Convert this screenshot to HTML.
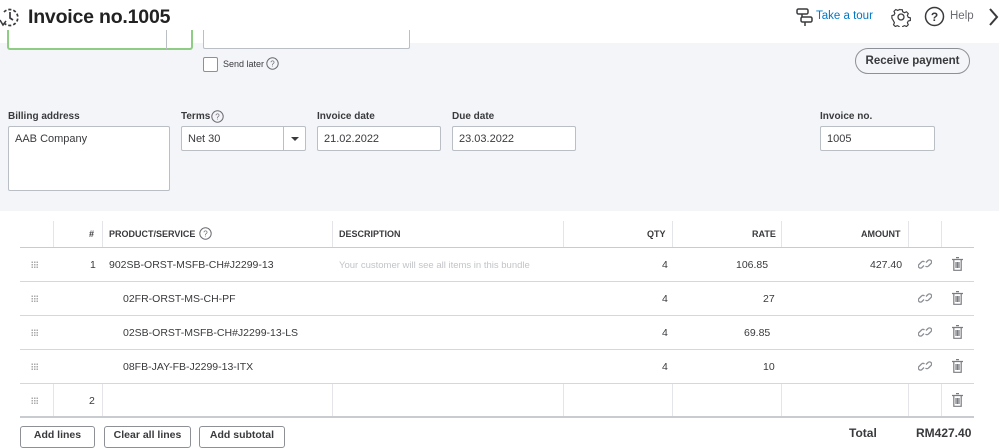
<!DOCTYPE html>
<html><head><meta charset="utf-8"><style>
*{box-sizing:border-box;margin:0;padding:0}
body{width:999px;height:443px;overflow:hidden;background:#fff;font-family:"Liberation Sans",Arial,sans-serif;color:#393a3d;position:relative}
.a{position:absolute}
.gray{left:0;top:43px;width:999px;height:168px;background:#f4f5f8}
.inp{background:#fff;border:1px solid #babec5;border-radius:2px;font-size:11px;color:#393a3d;padding:0 6px;line-height:24px}
.lbl{font-size:10px;font-weight:bold;color:#393a3d}
.hl{height:1px;background:#d4d7dc}
.vl{width:1px;background:#e3e5e8}
.th{font-size:9px;font-weight:bold;color:#393a3d;top:229px}
.td{font-size:10.5px;color:#393a3d}
.btn{top:426px;height:22px;border:1px solid #8d9096;border-radius:3px;font-size:10.5px;font-weight:bold;text-align:center;line-height:17px;color:#393a3d;background:#fff}
.grip{width:7px;height:7px;background-image:radial-gradient(circle,#aaa 0.7px,transparent 0.9px);background-size:2.5px 2.5px}
</style></head><body>
<svg class="a" style="left:0;top:6px" width="20" height="22" viewBox="0 0 20 22"><path d="M4 6 A8 8 0 1 1 4 17" fill="none" stroke="#393a3d" stroke-width="1.7" stroke-dasharray="3 2"/><path d="M10 6v6l3 2" fill="none" stroke="#393a3d" stroke-width="1.7"/><path d="M0 14l3 5 3-4" fill="none" stroke="#393a3d" stroke-width="1.5"/></svg>
<div class="a" style="left:28px;top:6px;font-size:19.5px;font-weight:bold;color:#222;letter-spacing:-0.2px">Invoice no.1005</div>
<svg class="a" style="left:796px;top:8px" width="18" height="18" viewBox="0 0 18 18" fill="none" stroke="#393a3d" stroke-width="1.5"><rect x="1" y="1" width="11" height="5" rx="1.5"/><rect x="5" y="9" width="11" height="5" rx="1.5"/><path d="M6 6v3M9 14v4"/></svg>
<div class="a" style="left:816px;top:10px;font-size:11.5px;color:#0077c5">Take a tour</div>
<svg class="a" style="left:891px;top:7px" width="20" height="20" viewBox="0 0 20 20" fill="none" stroke="#393a3d" stroke-width="1.3"><circle cx="10" cy="10" r="3"/><path d="M8.5 2h3l.5 2.3 2 1 2.2-1 2 2-1 2.2 1 2 2.3.5v3l-2.3.5-1 2 1 2.2-2 2-2.2-1-2 1-.5 2.3h-3l-.5-2.3-2-1-2.2 1-2-2 1-2.2-1-2L0 11.5v-3l2.3-.5 1-2-1-2.2 2-2 2.2 1 2-1z" transform="scale(.9) translate(1 1)"/></svg>
<svg class="a" style="left:924px;top:6px" width="21" height="21" viewBox="0 0 21 21"><circle cx="10.5" cy="10.5" r="9" fill="none" stroke="#393a3d" stroke-width="1.5"/><text x="10.5" y="15" text-anchor="middle" font-size="12" font-weight="bold" fill="#393a3d" font-family="Liberation Sans">?</text></svg>
<div class="a" style="left:950px;top:10px;font-size:11.5px;color:#6b6c72">Help</div>
<svg class="a" style="left:988px;top:7px" width="11" height="20" viewBox="0 0 11 20"><path d="M2 2l7 8-7 8" fill="none" stroke="#393a3d" stroke-width="2"/></svg>

<div class="a gray"></div>
<div class="a" style="left:7px;top:30px;width:186px;height:20px;background:#fff;border:2px solid #8fcd84;border-top:none;border-radius:0 0 3px 3px"></div>
<div class="a" style="left:166px;top:30px;width:1px;height:19px;background:#babec5"></div>
<div class="a" style="left:203px;top:30px;width:207px;height:19px;background:#fff;border:1px solid #babec5;border-top:none;border-radius:0 0 2px 2px"></div>
<div class="a" style="left:203px;top:57px;width:15px;height:15px;border:1px solid #8d9096;border-radius:2px;background:#fff"></div>
<div class="a" style="left:223px;top:59px;font-size:9px;color:#393a3d">Send later</div>
<svg class="a" style="left:266px;top:57px" width="13" height="13" viewBox="0 0 13 13"><circle cx="6.5" cy="6.5" r="5.7" fill="none" stroke="#6b6c72"/><text x="6.5" y="9.5" text-anchor="middle" font-size="8" fill="#6b6c72" font-family="Liberation Sans">?</text></svg>
<div class="a" style="left:855px;top:48px;width:115px;height:26px;border:1.5px solid #8d9096;border-radius:13px;font-size:11.5px;font-weight:bold;display:flex;align-items:center;justify-content:center;color:#393a3d">Receive payment</div>

<div class="a lbl" style="left:8px;top:111px">Billing address</div>
<div class="a inp" style="left:8px;top:126px;width:162px;height:65px;line-height:24px">AAB Company</div>
<div class="a lbl" style="left:181px;top:111px">Terms</div>
<svg class="a" style="left:211px;top:110px" width="13" height="13" viewBox="0 0 13 13"><circle cx="6.5" cy="6.5" r="5.7" fill="none" stroke="#6b6c72"/><text x="6.5" y="9.5" text-anchor="middle" font-size="8" fill="#6b6c72" font-family="Liberation Sans">?</text></svg>
<div class="a inp" style="left:181px;top:126px;width:125px;height:25px">Net 30</div>
<div class="a" style="left:283px;top:126px;width:1px;height:25px;background:#babec5"></div>
<div class="a" style="left:291px;top:137px;width:0;height:0;border-left:4px solid transparent;border-right:4px solid transparent;border-top:4px solid #393a3d"></div>
<div class="a lbl" style="left:317px;top:111px">Invoice date</div>
<div class="a inp" style="left:317px;top:126px;width:124px;height:25px">21.02.2022</div>
<div class="a lbl" style="left:452px;top:111px">Due date</div>
<div class="a inp" style="left:452px;top:126px;width:124px;height:25px">23.03.2022</div>
<div class="a lbl" style="left:820px;top:111px">Invoice no.</div>
<div class="a inp" style="left:820px;top:126px;width:115px;height:25px">1005</div>

<div class="a vl" style="left:53px;top:221px;height:26px"></div>
<div class="a vl" style="left:102px;top:221px;height:26px"></div>
<div class="a vl" style="left:332px;top:221px;height:26px"></div>
<div class="a vl" style="left:563px;top:221px;height:26px"></div>
<div class="a vl" style="left:672px;top:221px;height:26px"></div>
<div class="a vl" style="left:781px;top:221px;height:26px"></div>
<div class="a vl" style="left:908px;top:221px;height:26px"></div>
<div class="a vl" style="left:941px;top:221px;height:26px"></div>
<div class="a vl" style="left:53px;top:383px;height:34px"></div>
<div class="a vl" style="left:102px;top:383px;height:34px"></div>
<div class="a vl" style="left:332px;top:383px;height:34px"></div>
<div class="a vl" style="left:563px;top:383px;height:34px"></div>
<div class="a vl" style="left:672px;top:383px;height:34px"></div>
<div class="a vl" style="left:781px;top:383px;height:34px"></div>
<div class="a vl" style="left:908px;top:383px;height:34px"></div>
<div class="a vl" style="left:941px;top:383px;height:34px"></div>

<div class="a th" style="left:89px">#</div>
<div class="a th" style="left:109px">PRODUCT/SERVICE</div>
<svg class="a" style="left:199px;top:227px" width="13" height="13" viewBox="0 0 13 13"><circle cx="6.5" cy="6.5" r="5.7" fill="none" stroke="#6b6c72"/><text x="6.5" y="9.5" text-anchor="middle" font-size="8" fill="#6b6c72" font-family="Liberation Sans">?</text></svg>
<div class="a th" style="left:339px">DESCRIPTION</div>
<div class="a th" style="left:647px">QTY</div>
<div class="a th" style="left:752px">RATE</div>
<div class="a th" style="left:861px">AMOUNT</div>

<div class="a hl" style="left:20px;top:247px;width:954px;background:#c8cbd0"></div>
<div class="a hl" style="left:20px;top:281px;width:954px"></div>
<div class="a hl" style="left:20px;top:315px;width:954px"></div>
<div class="a hl" style="left:20px;top:349px;width:954px"></div>
<div class="a hl" style="left:20px;top:383px;width:954px"></div>
<div class="a" style="left:20px;top:416px;width:954px;height:2px;background:#c8cbd0"></div>

<div class="a grip" style="left:31px;top:261px"></div>
<div class="a grip" style="left:31px;top:295px"></div>
<div class="a grip" style="left:31px;top:329px"></div>
<div class="a grip" style="left:31px;top:363px"></div>
<div class="a grip" style="left:31px;top:397px"></div>

<div class="a td" style="left:90px;top:259px">1</div>
<div class="a td" style="left:109px;top:259px">902SB-ORST-MSFB-CH#J2299-13</div>
<div class="a td" style="left:339px;top:260px;font-size:9.5px;color:#c2c4c8">Your customer will see all items in this bundle</div>
<div class="a td" style="left:662px;top:259px">4</div>
<div class="a td" style="left:736px;top:259px">106.85</div>
<div class="a td" style="left:870px;top:259px">427.40</div>

<div class="a td" style="left:123px;top:293px">02FR-ORST-MS-CH-PF</div>
<div class="a td" style="left:662px;top:293px">4</div>
<div class="a td" style="left:763px;top:293px">27</div>
<div class="a td" style="left:123px;top:327px">02SB-ORST-MSFB-CH#J2299-13-LS</div>
<div class="a td" style="left:662px;top:327px">4</div>
<div class="a td" style="left:744px;top:327px">69.85</div>
<div class="a td" style="left:123px;top:361px">08FB-JAY-FB-J2299-13-ITX</div>
<div class="a td" style="left:662px;top:361px">4</div>
<div class="a td" style="left:763px;top:361px">10</div>
<div class="a td" style="left:89px;top:395px">2</div>

<svg class="a" style="left:918px;top:257px" width="14" height="14" viewBox="0 0 14 14" fill="none" stroke="#8d9096" stroke-width="1.3"><path d="M6 8.5l-2 2a2 2 0 0 1-3-3l2.5-2.5a2 2 0 0 1 3 0M8 5.5l2-2a2 2 0 0 1 3 3l-2.5 2.5a2 2 0 0 1-3 0"/></svg>
<svg class="a" style="left:918px;top:291px" width="14" height="14" viewBox="0 0 14 14" fill="none" stroke="#8d9096" stroke-width="1.3"><path d="M6 8.5l-2 2a2 2 0 0 1-3-3l2.5-2.5a2 2 0 0 1 3 0M8 5.5l2-2a2 2 0 0 1 3 3l-2.5 2.5a2 2 0 0 1-3 0"/></svg>
<svg class="a" style="left:918px;top:325px" width="14" height="14" viewBox="0 0 14 14" fill="none" stroke="#8d9096" stroke-width="1.3"><path d="M6 8.5l-2 2a2 2 0 0 1-3-3l2.5-2.5a2 2 0 0 1 3 0M8 5.5l2-2a2 2 0 0 1 3 3l-2.5 2.5a2 2 0 0 1-3 0"/></svg>
<svg class="a" style="left:918px;top:359px" width="14" height="14" viewBox="0 0 14 14" fill="none" stroke="#8d9096" stroke-width="1.3"><path d="M6 8.5l-2 2a2 2 0 0 1-3-3l2.5-2.5a2 2 0 0 1 3 0M8 5.5l2-2a2 2 0 0 1 3 3l-2.5 2.5a2 2 0 0 1-3 0"/></svg>

<svg class="a" style="left:952px;top:257px" width="11" height="14" viewBox="0 0 11 14" fill="none" stroke="#7a7c82" stroke-width="1.2"><path d="M0 2.5h11M4 .6h3M1.8 2.5v10.8h7.4V2.5M4 5v6M5.5 5v6M7 5v6"/></svg>
<svg class="a" style="left:952px;top:291px" width="11" height="14" viewBox="0 0 11 14" fill="none" stroke="#7a7c82" stroke-width="1.2"><path d="M0 2.5h11M4 .6h3M1.8 2.5v10.8h7.4V2.5M4 5v6M5.5 5v6M7 5v6"/></svg>
<svg class="a" style="left:952px;top:325px" width="11" height="14" viewBox="0 0 11 14" fill="none" stroke="#7a7c82" stroke-width="1.2"><path d="M0 2.5h11M4 .6h3M1.8 2.5v10.8h7.4V2.5M4 5v6M5.5 5v6M7 5v6"/></svg>
<svg class="a" style="left:952px;top:359px" width="11" height="14" viewBox="0 0 11 14" fill="none" stroke="#7a7c82" stroke-width="1.2"><path d="M0 2.5h11M4 .6h3M1.8 2.5v10.8h7.4V2.5M4 5v6M5.5 5v6M7 5v6"/></svg>
<svg class="a" style="left:952px;top:393px" width="11" height="14" viewBox="0 0 11 14" fill="none" stroke="#7a7c82" stroke-width="1.2"><path d="M0 2.5h11M4 .6h3M1.8 2.5v10.8h7.4V2.5M4 5v6M5.5 5v6M7 5v6"/></svg>

<div class="a btn" style="left:20px;width:75px">Add lines</div>
<div class="a btn" style="left:104px;width:87px">Clear all lines</div>
<div class="a btn" style="left:199px;width:86px">Add subtotal</div>
<div class="a" style="left:849px;top:426px;font-size:12px;font-weight:bold;color:#393a3d">Total</div>
<div class="a" style="left:916px;top:426px;font-size:12px;font-weight:bold;color:#393a3d">RM427.40</div>
</body></html>
